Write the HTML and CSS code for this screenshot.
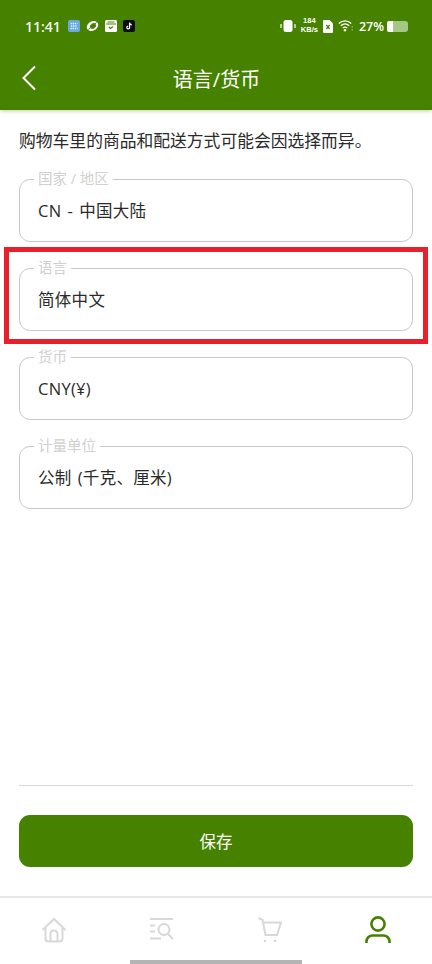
FILE: index.html
```html
<!DOCTYPE html>
<html lang="zh-CN">
  <head>
    <meta charset="UTF-8" />
    <meta name="viewport" content="width=device-width, initial-scale=1.0" />
    <title>语言/货币</title>
    <link rel="stylesheet" href="styles.css">
  </head>
  <body>
    <div class="page">
      <header class="top">
        <div class="status">
          <span class="time">11:41</span>
          <svg class="app" width="12" height="12" viewBox="0 0 12 12"><rect width="12" height="12" rx="2" fill="#6aa9dc"/><path d="M2.5 3.5h7M3 6h6M2.5 8.5h7" stroke="#dcecf8" stroke-width="1.4" stroke-dasharray="1.4 .7"/></svg>
          <svg class="app" width="13" height="12" viewBox="0 0 13 12"><ellipse cx="6.5" cy="6" rx="6" ry="4.6" transform="rotate(-30 6.5 6)" fill="#fff"/><ellipse cx="7" cy="6" rx="3.2" ry="2.500" transform="rotate(-35 7 6)" fill="#468200"/><path d="M2.500 9.500 10.500 2.500" stroke="#468200" stroke-width="1"/></svg>
          <svg class="app" width="12" height="12" viewBox="0 0 12 12"><rect width="12" height="12" rx="1.5" fill="#fff"/><path d="M1 4h10" stroke="#468200" stroke-width="1"/><path d="M2.5 2h7" stroke="#468200" stroke-width="1"/><path d="M4 7l1.5 1.5L8 6.5" stroke="#468200" stroke-width="1.3" fill="none"/></svg>
          <svg class="app" width="12" height="12" viewBox="0 0 12 12"><rect width="12" height="12" rx="2" fill="#0c0c14"/><path d="M6.6 2.5v5a1.4 1.4 0 1 1-1.4-1.4M6.6 2.8c.3 1.2 1.1 1.9 2.2 2" stroke="#fff" stroke-width="1.2" fill="none"/></svg>
          <span class="spacer"></span>
          <svg width="16" height="14" viewBox="0 0 16 14"><rect x="3.500" y="1" width="9" height="12" rx="2.500" fill="#fff"/><path d="M1 5v4M15 5v4" stroke="#fff" stroke-width="1.200"/></svg>
          <span class="speed">184<br>KB/s</span>
          <svg width="10" height="13" viewBox="0 0 10 13"><path d="M1 0h5.500L10 3.500V12a1 1 0 0 1-1 1H1a1 1 0 0 1-1-1V1a1 1 0 0 1 1-1z" fill="#fff"/><path d="M3.300 5l3.400 4M6.700 5 3.300 9" stroke="#468200" stroke-width="1.200"/></svg>
          <svg width="15" height="12" viewBox="0 0 15 12"><path d="M.8 3.500C4.500 0 9.500 0 13.200 3.500M2.800 5.800c2.600-2.300 5.800-2.300 8.400 0M4.800 8c1.500-1.200 2.900-1.200 4.400 0" stroke="#fff" stroke-width="1.300" fill="none"/><circle cx="7" cy="10.300" r="1.200" fill="#fff"/><path d="M14.200 6.500v.8M14.200 9.500v.8" stroke="#fff" stroke-width="1"/></svg>
          <span class="pct">27%</span>
          <span class="battery"><span class="battery-fill"></span></span>
        </div>
        <div class="titlebar">
          <svg class="back" width="16" height="26" viewBox="0 0 16 26"><path d="M14 1.500 2.500 13 14 24.500" stroke="#fff" stroke-width="2" fill="none"/></svg>
          <h1>语言/货币</h1>
        </div>
      </header>

      <main class="content">
        <p class="intro">购物车里的商品和配送方式可能会因选择而异。</p>
        <fieldset class="field">
          <legend>国家 / 地区</legend>
          <div class="value">CN - 中国大陆</div>
        </fieldset>
        <fieldset class="field">
          <legend>语言</legend>
          <div class="value">简体中文</div>
        </fieldset>
        <fieldset class="field">
          <legend>货币</legend>
          <div class="value">CNY(¥)</div>
        </fieldset>
        <fieldset class="field">
          <legend>计量单位</legend>
          <div class="value">公制 (千克、厘米)</div>
        </fieldset>
        <div class="highlight"></div>
      </main>

      <div class="actions">
        <button type="button" class="save">保存</button>
      </div>

      <nav class="tabs">
        <svg width="26" height="26" viewBox="0 0 26 26" fill="none" stroke="#d8d8d8" stroke-width="2"><path d="M1.500 13 13 2l11.500 11"/><path d="M4.500 11v10.500a3 3 0 0 0 3 3h11a3 3 0 0 0 3-3V11"/><path d="M9.500 24V17a3.500 3.500 0 0 1 7 0v7"/></svg>
        <svg width="26" height="26" viewBox="0 0 26 26" fill="none" stroke="#d8d8d8" stroke-width="2"><path d="M1 2h23M1 8.500h5M1 14.500h5M1 21.500h11"/><circle cx="15" cy="12.500" r="5.500"/><path d="m19 17 5 5"/></svg>
        <svg width="24" height="26" viewBox="0 0 24 26" fill="none" stroke="#d8d8d8" stroke-width="2"><path d="M.5 1 4.500 3 7.500 18H19L23 5.500H5"/><circle cx="7" cy="24" r="1.300" fill="#d8d8d8" stroke="none"/><circle cx="17" cy="24" r="1.300" fill="#d8d8d8" stroke="none"/></svg>
        <svg width="26" height="28" viewBox="0 0 26 28" fill="none" stroke="#468200" stroke-width="2.600"><circle cx="13" cy="8" r="6.600"/><path d="M1.500 27v-1.500a6 6 0 0 1 6-6h11a6 6 0 0 1 6 6V27"/></svg>
      </nav>
      <div class="home-bar"></div>
    </div>
  </body>
</html>
```

FILE: styles.css
```css
* {
  box-sizing: border-box;
}

body {
  margin: 0;
  font-family: "Open Sans", "Noto Sans CJK SC", sans-serif;
  background-color: #fff;
  color: #222;
}

.page {
  display: flex;
  flex-direction: column;
  width: 432px;
  height: 964px;
  overflow: hidden;
  position: relative;
}

.top {
  height: 110px;
  flex: none;
  padding: 0 24px 0 25px;
  background-color: #468200;
  color: #fff;
  box-shadow: 0 1px 4px rgba(70, 130, 0, 0.35);
}

.status {
  display: flex;
  align-items: center;
  height: 20px;
  margin-top: 16px;
  gap: 5px;
}

.status .app {
  margin-right: 1px;
}

.time {
  font-size: 14px;
  font-weight: 600;
  margin-right: 2px;
  color: #f2f6ec;
}

.spacer {
  flex: 1;
}

.speed {
  font-family: "Liberation Sans", sans-serif;
  font-size: 7.500px;
  line-height: 8.700px;
  font-weight: 700;
  text-align: center;
}

.pct {
  font-size: 12.500px;
  font-weight: 600;
  margin-left: 1px;
}

.battery {
  display: block;
  width: 21px;
  height: 11px;
  margin-left: -2px;
  border-radius: 3px;
  background-color: #a5c685;
}

.battery-fill {
  display: block;
  width: 6px;
  height: 11px;
  border-radius: 2px 0 0 2px;
  background-color: #fff;
}

.titlebar {
  display: flex;
  align-items: center;
  justify-content: center;
  position: relative;
  height: 36px;
  margin-top: 24px;
}

.back {
  position: absolute;
  left: -4px;
  top: 5px;
}

.titlebar h1 {
  margin: 0;
  font-size: 20px;
  font-weight: 400;
}

.content {
  flex: 1;
  position: relative;
  padding: 20px 19px 0;
}

.intro {
  margin: 0 0 19px;
  font-size: 16.800px;
  line-height: 22px;
  color: #2a2a2a;
}

.field {
  height: 71px;
  margin: 0 0 18px;
  padding: 0 18px;
  border: 1px solid #c8c8c8;
  border-radius: 11px;
}

.field legend {
  padding: 0 4px;
  margin-left: -4px;
  font-size: 14.500px;
  line-height: 16px;
  color: #d0d0d0;
}

.value {
  margin-top: 13px;
  font-size: 16.500px;
  line-height: 22px;
  letter-spacing: 0.3px;
  word-spacing: 1.500px;
  color: #2a2a2a;
}

.highlight {
  position: absolute;
  left: 4px;
  top: 137px;
  width: 424px;
  height: 97px;
  border: 5px solid #e7202c;
}

.actions {
  flex: none;
  height: 111px;
  margin: 0 19px;
  padding-top: 29px;
  border-top: 1px solid #d8d8d8;
}

.save {
  display: block;
  width: 100%;
  height: 52px;
  border: none;
  border-radius: 11px;
  background-color: #468200;
  color: #fff;
  font-family: inherit;
  font-size: 16.500px;
}

.tabs {
  display: grid;
  grid-template-columns: repeat(4, 1fr);
  justify-items: center;
  align-items: center;
  flex: none;
  height: 68px;
  padding: 0 0 2px;
  border-top: 2px solid #e8e8e8;
}

.home-bar {
  position: absolute;
  left: 130px;
  bottom: 0;
  width: 172px;
  height: 4px;
  background-color: #b4b4b4;
}
```
